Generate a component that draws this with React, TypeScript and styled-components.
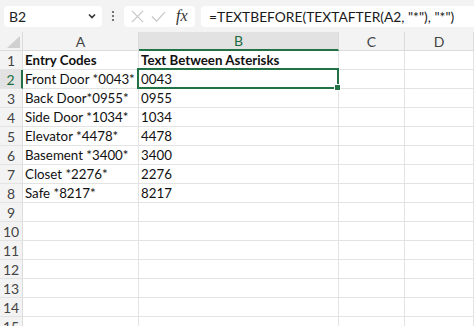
import React from "react";
import styled, { createGlobalStyle } from "styled-components";

const GlobalStyle = createGlobalStyle`
  html, body {
    margin: 0;
    padding: 0;
    background: #ffffff;
    overflow: hidden;
  }
  body {
    font-family: Lato, "Open Sans", sans-serif;
  }
`;

const colWidths = [23, 116, 200, 66, 69];
const columns = ["A", "B", "C", "D"];

const rows: [string, string][] = [
  ["Entry Codes", "Text Between Asterisks"],
  ["Front Door *0043*", "0043"],
  ["Back Door*0955*", "0955"],
  ["Side Door *1034*", "1034"],
  ["Elevator *4478*", "4478"],
  ["Basement *3400*", "3400"],
  ["Closet *2276*", "2276"],
  ["Safe *8217*", "8217"],
];

const TOTAL_ROWS = 15;

const Page = styled.div`
  width: 474px;
  height: 326px;
  overflow: hidden;
  background: #ffffff;
`;

const FormulaBar = styled.div`
  height: 32px;
  background: #f3f3f3;
  display: flex;
  align-items: center;
  padding-left: 4px;
  box-sizing: border-box;
`;

const NameBox = styled.div`
  width: 98px;
  height: 21px;
  background: #ffffff;
  border-radius: 4px;
  display: flex;
  align-items: center;
  justify-content: space-between;
  padding: 0 5px 0 5px;
  box-sizing: border-box;
  font-size: 14px;
  color: #222;
  svg {
    width: 10px;
    height: 10px;
  }
`;

const Dots = styled.div`
  width: 22px;
  display: flex;
  justify-content: center;
  svg {
    width: 4px;
    height: 12px;
  }
`;

const ButtonBox = styled.div`
  width: 71px;
  height: 21px;
  background: #ffffff;
  border-radius: 4px;
  display: flex;
  align-items: center;
  padding: 0 4px 0 6px;
  gap: 6px;
  box-sizing: border-box;
  margin-right: 6px;
  svg {
    width: 15px;
    height: 15px;
  }
`;

const Fx = styled.span`
  margin-left: 4px;
  font-family: "Liberation Serif", serif;
  font-style: italic;
  font-size: 16px;
  color: #333;
  line-height: 1;
`;

const FormulaInput = styled.div`
  flex: 1;
  height: 21px;
  background: #ffffff;
  border-radius: 4px 0 0 4px;
  display: flex;
  align-items: center;
  padding-left: 8px;
  font-size: 13.8px;
  color: #1a1a1a;
  white-space: nowrap;
`;

const Grid = styled.div`
  display: grid;
  grid-template-columns: ${colWidths.map((w) => `${w}px`).join(" ")};
  grid-auto-rows: 19px;
`;

const Corner = styled.div`
  background: #f3f3f3;
  border-right: 1px solid #dcdcdc;
  border-bottom: 1px solid #dcdcdc;
  box-sizing: border-box;
  position: relative;
  overflow: hidden;
  svg {
    position: absolute;
    right: 2px;
    bottom: 2px;
  }
`;

const ColHeader = styled.div<{ $active?: boolean }>`
  background: ${(p) => (p.$active ? "#e2e2e2" : "#f3f3f3")};
  border-right: 1px solid #dcdcdc;
  border-bottom: ${(p) => (p.$active ? "2px solid #217346" : "1px solid #dcdcdc")};
  box-sizing: border-box;
  display: flex;
  align-items: center;
  justify-content: center;
  font-size: 14px;
  color: ${(p) => (p.$active ? "#1e6b41" : "#444")};
`;

const RowHeader = styled.div<{ $active?: boolean }>`
  background: ${(p) => (p.$active ? "#e2e2e2" : "#f3f3f3")};
  border-right: ${(p) => (p.$active ? "2px solid #217346" : "1px solid #dcdcdc")};
  border-bottom: 1px solid #e3e3e3;
  box-sizing: border-box;
  display: flex;
  align-items: center;
  justify-content: center;
  font-size: 14px;
  color: ${(p) => (p.$active ? "#1e6b41" : "#444")};
`;

const Cell = styled.div<{ $bold?: boolean }>`
  border-right: 1px solid #e3e3e3;
  border-bottom: 1px solid #e3e3e3;
  box-sizing: border-box;
  display: flex;
  align-items: center;
  padding-left: 2px;
  font-size: 13.3px;
  font-weight: ${(p) => (p.$bold ? 700 : 400)};
  color: #111;
  white-space: nowrap;
  overflow: visible;
  position: relative;
`;

const Selection = styled.div`
  position: absolute;
  left: -2px;
  top: -2px;
  right: -1px;
  bottom: -1px;
  border: 2px solid #217346;
  pointer-events: none;
  z-index: 2;
`;

const FillHandle = styled.div`
  position: absolute;
  right: -4px;
  bottom: -4px;
  width: 5px;
  height: 5px;
  background: #217346;
  border: 1px solid #ffffff;
`;

const Chevron = () => (
  <svg viewBox="0 0 10 10">
    <path d="M2 3.5 L5 6.5 L8 3.5" fill="none" stroke="#333" strokeWidth="1.6" />
  </svg>
);

const VDots = () => (
  <svg viewBox="0 0 4 12">
    <circle cx="2" cy="2" r="1.1" fill="#555" />
    <circle cx="2" cy="6" r="1.1" fill="#555" />
    <circle cx="2" cy="10" r="1.1" fill="#555" />
  </svg>
);

const CrossIcon = () => (
  <svg viewBox="0 0 16 16">
    <path d="M2 2 L14 14 M14 2 L2 14" stroke="#c4c4c4" strokeWidth="1.2" fill="none" />
  </svg>
);

const CheckIcon = () => (
  <svg viewBox="0 0 16 16">
    <path d="M1 8 L6 13 L15 3" stroke="#c4c4c4" strokeWidth="1.2" fill="none" />
  </svg>
);

const App = () => {
  return (
    <Page>
      <GlobalStyle />
      <FormulaBar>
        <NameBox>
          <span>B2</span>
          <Chevron />
        </NameBox>
        <Dots>
          <VDots />
        </Dots>
        <ButtonBox>
          <CrossIcon />
          <CheckIcon />
          <Fx>fx</Fx>
        </ButtonBox>
        <FormulaInput>=TEXTBEFORE(TEXTAFTER(A2, "*"), "*")</FormulaInput>
      </FormulaBar>
      <Grid>
        <Corner>
          <svg width="13" height="12" viewBox="0 0 13 12">
            <path d="M13 0 L13 12 L0 12 Z" fill="#d0d0d0" />
          </svg>
        </Corner>
        {columns.map((c) => (
          <ColHeader key={c} $active={c === "B"}>
            {c}
          </ColHeader>
        ))}
        {Array.from({ length: TOTAL_ROWS }).map((_, i) => {
          const r = rows[i];
          return (
            <React.Fragment key={i}>
              <RowHeader $active={i === 1}>{i + 1}</RowHeader>
              <Cell $bold={i === 0}>{r ? r[0] : ""}</Cell>
              <Cell $bold={i === 0}>
                {r ? r[1] : ""}
                {i === 1 && (
                  <Selection>
                    <FillHandle />
                  </Selection>
                )}
              </Cell>
              <Cell />
              <Cell />
            </React.Fragment>
          );
        })}
      </Grid>
    </Page>
  );
};

export default App;
